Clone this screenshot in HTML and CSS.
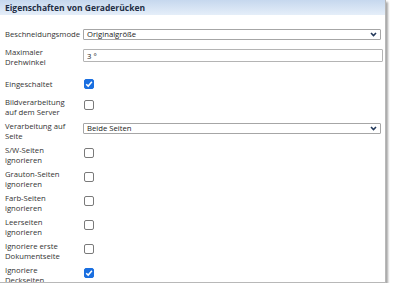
FILE: index.html
```html
<!DOCTYPE html>
<html lang="de">
<head>
  <meta charset="UTF-8">
  <title>Eigenschaften von Geraderücken</title>
  <link rel="stylesheet" href="styles.css">
</head>
<body>
  <div class="panel">
    <div class="panel-head">Eigenschaften von Geraderücken</div>

    <div class="form">
      <div class="row single">
        <label class="label">Beschneidungsmode</label>
        <div class="select">
          <span>Originalgröße</span>
          <svg class="chevron" width="7" height="5" viewBox="0 0 7 5"><path d="M1 1 L3.5 3.5 L6 1" fill="none" stroke="#22385a" stroke-width="1.6"/></svg>
        </div>
      </div>

      <div class="row spaced">
        <label class="label">Maximaler Drehwinkel</label>
        <input class="text-input" type="text" value="3 °">
      </div>

      <div class="row single">
        <label class="label">Eingeschaltet</label>
        <input class="check" type="checkbox" checked>
      </div>

      <div class="row">
        <label class="label">Bildverarbeitung auf dem Server</label>
        <input class="check" type="checkbox">
      </div>

      <div class="row">
        <label class="label">Verarbeitung auf Seite</label>
        <div class="select">
          <span>Beide Seiten</span>
          <svg class="chevron" width="7" height="5" viewBox="0 0 7 5"><path d="M1 1 L3.5 3.5 L6 1" fill="none" stroke="#22385a" stroke-width="1.6"/></svg>
        </div>
      </div>

      <div class="row">
        <label class="label">S/W-Seiten ignorieren</label>
        <input class="check" type="checkbox">
      </div>

      <div class="row">
        <label class="label">Grauton-Seiten ignorieren</label>
        <input class="check" type="checkbox">
      </div>

      <div class="row">
        <label class="label">Farb-Seiten ignorieren</label>
        <input class="check" type="checkbox">
      </div>

      <div class="row">
        <label class="label">Leerseiten ignorieren</label>
        <input class="check" type="checkbox">
      </div>

      <div class="row">
        <label class="label">Ignoriere erste Dokumentseite</label>
        <input class="check" type="checkbox">
      </div>

      <div class="row">
        <label class="label">Ignoriere Deckseiten</label>
        <input class="check" type="checkbox" checked>
      </div>
    </div>
  </div>
</body>
</html>
```

FILE: styles.css
```css
/* Properties panel */
body {
  margin: 0;
  background: #ffffff;
  font-family: "Open Sans", "DejaVu Sans", sans-serif;
  font-size: 7.7px;
  color: #333333;
}

.panel {
  width: 385px;
  height: 282px;
  overflow: hidden;
  background: #ffffff;
  border-right: 1px solid #b8b8b8;
  border-bottom: 1px solid #b8b8b8;
  box-shadow: 2px 2px 2px rgba(0, 0, 0, 0.35);
}

.panel-head {
  height: 15px;
  line-height: 15px;
  padding-left: 5px;
  font-size: 8.5px;
  font-weight: bold;
  color: #1f2e45;
  background: linear-gradient(#c6d8ee, #e5eef9);
}

.form {
  padding: 14px 2px 0 5px;
}

.row {
  display: flex;
  align-items: flex-start;
  min-height: 20px;
  margin-bottom: 4px;
}

.row.single {
  min-height: 14px;
}

.row.spaced {
  margin-bottom: 12px;
}

.label {
  width: 73px;
  margin-right: 5px;
  flex-shrink: 0;
  line-height: 10px;
}

.select {
  flex: 1;
  display: flex;
  align-items: center;
  justify-content: space-between;
  height: 9px;
  margin: 0 2px 0 0;
  padding: 0 3px;
  border: 1px solid #a6a6a6;
  border-radius: 1px;
  color: #222222;
  line-height: 9px;
}

.row:not(.single) .select {
  margin-top: 2px;
}

.chevron {
  display: block;
}

.text-input {
  flex: 1;
  height: 13px;
  margin: 2px 0 0;
  padding: 0 3px;
  border: 1px solid #b4b4b4;
  border-radius: 1px;
  box-sizing: border-box;
  font-family: inherit;
  font-size: 7.7px;
  color: #222222;
  outline: none;
}

.check {
  appearance: none;
  width: 10px;
  height: 10px;
  margin: 3px 0 0 1px;
  border: 1px solid #7a7a7a;
  border-radius: 2px;
  box-sizing: border-box;
  background: #ffffff;
}

.row.single .check {
  margin-top: 0;
}

.check:checked {
  border-color: #1a6fe0;
  background: #1a6fe0 url("data:image/svg+xml,%3Csvg xmlns='http://www.w3.org/2000/svg' viewBox='0 0 10 10'%3E%3Cpath d='M2.2 5.2 L4.2 7.1 L7.9 2.8' fill='none' stroke='white' stroke-width='1.5'/%3E%3C/svg%3E") center / 10px 10px no-repeat;
}
```
